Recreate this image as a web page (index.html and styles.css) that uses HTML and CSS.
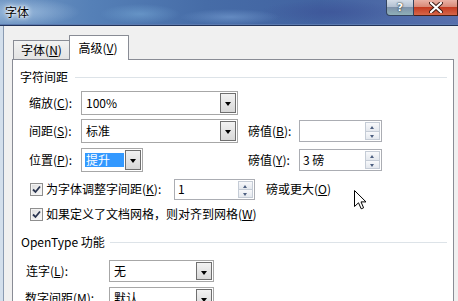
FILE: index.html
```html
<!DOCTYPE html>
<html lang="zh-cn">
<head>
    <meta charset="UTF-8">
    <title>字体</title>
    <link rel="stylesheet" href="styles.css">
</head>
<body>
    <div class="janela">
        <div class="titulo">
            <span class="titulo-texto">字体</span>
            <div class="botoes">
                <div class="btn-ajuda">?</div>
                <div class="btn-fechar">
                    <svg width="14" height="11" viewBox="0 0 14 11">
                        <path d="M2 1 L12 10 M12 1 L2 10" stroke="#3a1a14" stroke-width="4" stroke-linecap="round"/>
                        <path d="M2 1 L12 10 M12 1 L2 10" stroke="#fff" stroke-width="2.2" stroke-linecap="round"/>
                    </svg>
                </div>
            </div>
        </div>
        <div class="cliente">
            <div class="abas">
                <div class="aba">字体(<u>N</u>)</div>
                <div class="aba ativa">高级(<u>V</u>)</div>
            </div>
            <div class="painel">
                <div class="grupo">
                    <span>字符间距</span>
                    <i class="linha"></i>
                </div>

                <div class="linha-form l1">
                    <label class="rotulo">缩放(<u>C</u>):</label>
                    <div class="slot">
                        <div class="combo larga"><span class="valor">100%</span><b class="seta"></b></div>
                    </div>
                </div>

                <div class="linha-form l2">
                    <label class="rotulo">间距(<u>S</u>):</label>
                    <div class="slot">
                        <div class="combo larga"><span class="valor">标准</span><b class="seta"></b></div>
                    </div>
                    <label class="rotulo-b">磅值(<u>B</u>):</label>
                    <div class="spin"><span class="valor"></span><div class="spin-btns"><b class="cima"></b><b class="baixo"></b></div></div>
                </div>

                <div class="linha-form l3">
                    <label class="rotulo">位置(<u>P</u>):</label>
                    <div class="slot">
                        <div class="combo curta"><span class="valor sel">提升</span><b class="seta"></b></div>
                    </div>
                    <label class="rotulo-b">磅值(<u>Y</u>):</label>
                    <div class="spin"><span class="valor">3 磅</span><div class="spin-btns"><b class="cima"></b><b class="baixo"></b></div></div>
                </div>

                <div class="linha-form l4">
                    <span class="check"><svg width="9" height="9" viewBox="0 0 9 9"><path d="M1 4.5 L3.5 7 L8 1.5" fill="none" stroke="#2a3550" stroke-width="1.8"/></svg></span>
                    <label class="rotulo-k">为字体调整字间距(<u>K</u>):</label>
                    <div class="spin spin-k"><span class="valor">1</span><div class="spin-btns"><b class="cima"></b><b class="baixo"></b></div></div>
                    <label class="depois">磅或更大(<u>O</u>)</label>
                </div>

                <div class="linha-form l5">
                    <span class="check"><svg width="9" height="9" viewBox="0 0 9 9"><path d="M1 4.5 L3.5 7 L8 1.5" fill="none" stroke="#2a3550" stroke-width="1.8"/></svg></span>
                    <label class="texto-check">如果定义了文档网格，则对齐到网格(<u>W</u>)</label>
                </div>

                <div class="grupo g2">
                    <span>OpenType 功能</span>
                    <i class="linha"></i>
                </div>

                <div class="linha-form l6">
                    <label class="rotulo2">连字(<u>L</u>):</label>
                    <div class="combo media"><span class="valor">无</span><b class="seta"></b></div>
                </div>

                <div class="linha-form l7">
                    <label class="rotulo2">数字间距(<u>M</u>):</label>
                    <div class="combo media"><span class="valor">默认</span><b class="seta"></b></div>
                </div>
            </div>
        </div>

        <svg class="cursor" width="13" height="20" viewBox="0 0 13 20">
            <path d="M0.5 0.5 L0.5 16.5 L4.5 12.8 L7.2 18.8 L9.6 17.8 L7 11.9 L12 11.9 Z" fill="#fff" stroke="#000" stroke-width="1"/>
        </svg>
    </div>
</body>
</html>
```

FILE: styles.css
```css
*{
    box-sizing: border-box;
}
body{
    margin: 0;
    width: 458px;
    height: 301px;
    overflow: hidden;
    background-color: #f0f0f0;
    color: #000;
    font-family: "Noto Sans CJK SC", "Noto Sans", sans-serif;
    font-size: 12px;
    line-height: 16px;
}
u{
    text-decoration: underline;
    text-underline-offset: 1px;
}
div.janela{
    position: relative;
    height: 301px;
    background-color: #d3dfec;
}

/* barra de titulo */
div.titulo{
    display: flex;
    height: 26px;
    border-bottom: 1px solid #22345a;
    background:
        radial-gradient(ellipse 60px 14px at 20px 12px, rgba(170, 200, 230, .7), transparent),
        radial-gradient(ellipse 40px 10px at 140px 14px, rgba(120, 170, 215, .55), transparent),
        radial-gradient(ellipse 50px 8px at 230px 17px, rgba(130, 170, 220, .5), transparent),
        radial-gradient(ellipse 70px 12px at 330px 12px, rgba(60, 80, 150, .6), transparent),
        linear-gradient(90deg, #7197c4 0%, #5580b7 20%, #466ca7 45%, #4263a1 70%, #5870ad 100%);
    box-shadow: inset 0 -1px 0 #5d7bb0;
}
span.titulo-texto{
    padding: 4px 0 0 5px;
    font-size: 12px;
    color: #000;
    text-shadow: 0 0 6px #fff, 0 0 4px #fff, 0 0 2px #fff;
}
div.botoes{
    display: flex;
    margin-left: auto;
    height: 16px;
}
div.btn-ajuda{
    width: 28px;
    height: 16px;
    border: 1px solid #34445f;
    border-top: none;
    border-radius: 0 0 0 4px;
    background: linear-gradient(#d4dde8 0%, #b3c1d2 45%, #7f93ab 50%, #8fb0b8 100%);
    color: #fff;
    font-family: "DejaVu Sans", sans-serif;
    font-weight: bold;
    font-size: 11px;
    line-height: 15px;
    text-align: center;
    text-shadow: 0 0 2px #233, 0 0 1px #233;
}
div.btn-fechar{
    display: flex;
    justify-content: center;
    align-items: center;
    width: 44px;
    height: 16px;
    border: 1px solid #4a2018;
    border-top: none;
    border-left: none;
    background: linear-gradient(#eab2a6 0%, #d98a78 45%, #c43c22 50%, #d6674a 100%);
}

/* area do cliente */
div.cliente{
    height: 275px;
    margin-left: 3px;
    border-left: 1px solid #8a9bb2;
    background-color: #f0f0f0;
}
div.abas{
    display: flex;
    align-items: flex-end;
    height: 33px;
    padding-left: 9px;
}
div.aba{
    width: 57px;
    height: 19px;
    border: 1px solid #898c95;
    border-bottom: none;
    background: linear-gradient(#f2f2f2, #e3e3e3);
    text-align: center;
    line-height: 18px;
}
div.aba.ativa{
    position: relative;
    width: 60px;
    height: 25px;
    margin-bottom: -1px;
    margin-left: -1px;
    border-radius: 1px 1px 0 0;
    background: #fff;
    line-height: 24px;
    padding-right: 2px;
}
div.painel{
    width: 442px;
    height: 242px;
    margin-left: 8px;
    padding: 9px 6px 0 7px;
    border: 1px solid #898c95;
    border-bottom: none;
    background-color: #fff;
}
div.grupo{
    display: flex;
    align-items: center;
    height: 16px;
}
div.grupo i.linha{
    flex: 1;
    height: 1px;
    margin-left: 7px;
    background-color: #dde3e8;
}
div.grupo.g2{
    margin-top: 11px;
    padding-left: 1px;
}
div.grupo.g2 i.linha{
    margin-left: 5px;
}

div.linha-form{
    display: flex;
    align-items: center;
    padding-left: 9px;
}
div.l1{ height: 24px; margin-top: 6px; }
div.l2{ height: 24px; margin-top: 4px; }
div.l3{ height: 24px; margin-top: 5px; }
div.l4{ height: 22px; margin-top: 6px; padding-left: 10px; }
div.l5{ height: 18px; margin-top: 5px; padding-left: 10px; }
div.l6{ height: 22px; margin-top: 10px; padding-left: 6px; }
div.l7{ height: 22px; margin-top: 5px; padding-left: 5px; }

label.rotulo{
    width: 52px;
}
label.rotulo2{
    width: 83px;
}
div.l7 label.rotulo2{
    width: 84px;
}
div.slot{
    width: 157px;
}
label.rotulo-b{
    width: 51px;
    margin-left: 10px;
}

/* combo */
div.combo{
    display: flex;
    align-items: center;
    height: 24px;
    padding: 0 1px 0 3px;
    border: 1px solid #a7a7a7;
    background-color: #fff;
}
div.combo.larga{ width: 157px; }
div.combo.curta{ width: 62px; }
div.combo.media{ width: 105px; height: 22px; }
div.combo span.valor{
    flex: 1;
    padding-left: 1px;
}
span.valor.sel{
    margin-right: 1px;
    height: 14px;
    line-height: 14px;
    background-color: #3399ff;
    color: #fff;
}
b.seta{
    position: relative;
    width: 16px;
    height: 20px;
    border: 1px solid #6f6f6f;
    background: linear-gradient(#f2f2f2, #d8d8d8);
}
div.combo.media b.seta{
    height: 18px;
}
b.seta::after{
    content: "";
    position: absolute;
    left: 4px;
    top: 8px;
    border-left: 3.5px solid transparent;
    border-right: 3.5px solid transparent;
    border-top: 4px solid #000;
}

/* spin */
div.spin{
    display: flex;
    align-items: center;
    width: 83px;
    height: 22px;
    padding: 1px 1px 1px 3px;
    border: 1px solid #abadb3;
    background-color: #fff;
}
div.spin.spin-k{
    width: 81px;
    height: 21px;
}
div.spin span.valor{
    flex: 1;
}
div.spin-btns{
    display: flex;
    flex-direction: column;
    width: 15px;
    height: 100%;
}
div.spin-btns b{
    position: relative;
    flex: 1;
    border: 1px solid #c5ccd6;
    background: linear-gradient(#f8f9fb, #e4e8ee);
}
div.spin-btns b + b{
    border-top: none;
}
div.spin-btns b::after{
    content: "";
    position: absolute;
    left: 4px;
    border-left: 2.5px solid transparent;
    border-right: 2.5px solid transparent;
}
b.cima::after{
    top: 3px;
    border-bottom: 3px solid #4d5f80;
}
b.baixo::after{
    top: 3px;
    border-top: 3px solid #4d5f80;
}

/* checkbox */
span.check{
    display: flex;
    align-items: center;
    justify-content: center;
    width: 13px;
    height: 13px;
    border: 1px solid #8f8f8f;
    background: linear-gradient(135deg, #dcdcdc, #fbfbfb);
    box-shadow: inset 0 0 0 1px #f4f4f4;
}
label.rotulo-k{
    width: 128px;
    margin-left: 3px;
}
label.texto-check{
    margin-left: 3px;
}
label.depois{
    margin-left: 11px;
}

svg.cursor{
    position: absolute;
    left: 354px;
    top: 190px;
}
```
